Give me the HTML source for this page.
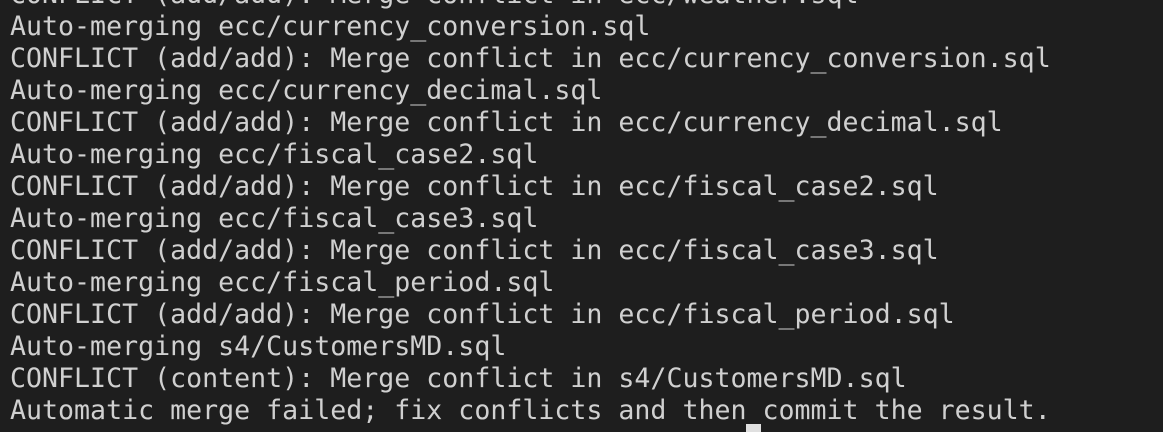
<!DOCTYPE html>
<html><head><style>
html,body{margin:0;padding:0;width:1163px;height:429px;overflow:hidden;background:#1e1e1e;}
pre{position:absolute;left:10px;top:-21px;margin:0;font-family:"DejaVu Sans Mono","Liberation Mono",monospace;font-size:26.6px;line-height:32px;color:#d0d0d0;}
.cur{position:absolute;left:746px;top:424px;width:15px;height:8px;background:#e0e0e0;}
</style></head><body>
<pre>CONFLICT (add/add): Merge conflict in ecc/weather.sql
Auto-merging ecc/currency_conversion.sql
CONFLICT (add/add): Merge conflict in ecc/currency_conversion.sql
Auto-merging ecc/currency_decimal.sql
CONFLICT (add/add): Merge conflict in ecc/currency_decimal.sql
Auto-merging ecc/fiscal_case2.sql
CONFLICT (add/add): Merge conflict in ecc/fiscal_case2.sql
Auto-merging ecc/fiscal_case3.sql
CONFLICT (add/add): Merge conflict in ecc/fiscal_case3.sql
Auto-merging ecc/fiscal_period.sql
CONFLICT (add/add): Merge conflict in ecc/fiscal_period.sql
Auto-merging s4/CustomersMD.sql
CONFLICT (content): Merge conflict in s4/CustomersMD.sql
Automatic merge failed; fix conflicts and then commit the result.</pre>
<div class="cur"></div>
</body></html>
